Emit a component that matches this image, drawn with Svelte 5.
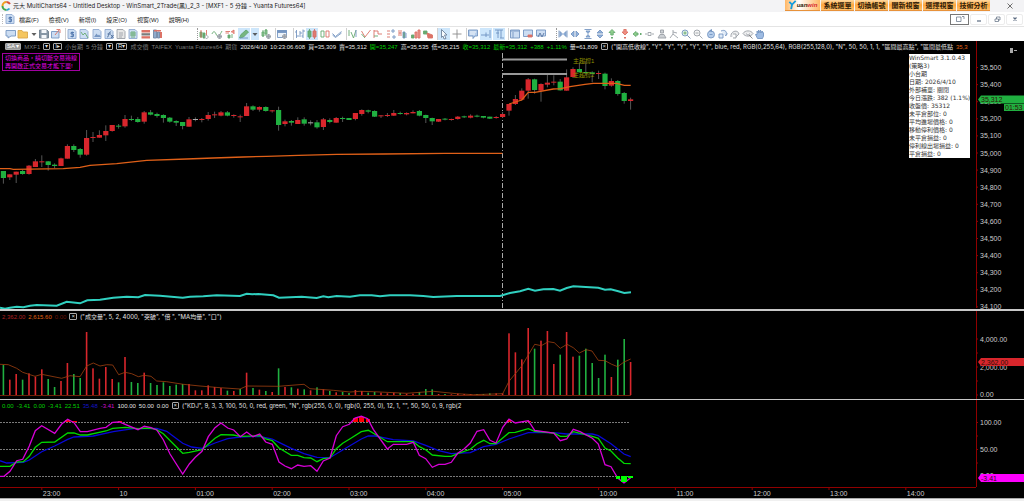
<script>
  const menus = ["檔案(F)", "檢視(V)", "新增(I)", "設定(O)", "視窗(W)", "說明(H)"];
  const shortcuts = ["系統選單", "切換帳號", "開新視窗", "選擇視窗", "技術分析"];

  const blue = "#5f84b8";
  const pale = "#c4d8f0";
  const green = "#4d9c58";
  const red = "#d65a4c";
  const grey = "#8b9199";

  // every icon is a list of [path, fill, stroke] on a 12x12 grid
  const page = ["M2 1.5H8L10 3.5V10.5H2Z", pale, "#7d9cc8"];
  const gear = ["M6.5 8.5a2 2 0 1 0 4 0a2 2 0 1 0-4 0M8.5 6v5M6 8.5h5", "#b9c2cd", grey];
  const icons = {
    book: [["M1 2.5H10.5V8H6L3 10V8H1Z", pale, blue]],
    folder: [["M1 2.5H5L6 4H10.5V10H1Z", "#f4bd45", "#d6982d"]],
    caret: [["M3.5 5H8.5L6 8Z", "#444", "none"]],
    save: [["M1.5 2H9L10.5 3.5V10H1.5Z", "#718496", "#556879"], ["M3.5 2H8.5V5H3.5ZM3.5 7H8.5V10H3.5Z", "#f3f6fa", "none"]],
    send: [["M1.5 3.5H9V10H1.5Z", pale, blue], ["M5 7L9 2M6.5 1.5H10V5", "none", red]],
    sheet: [page, ["M8 4.5H5V6H7.5V8.5H4.5M6.2 3.5V9.5", "none", "#315f9f"]],
    curve: [page, ["M3 4L5 7L7 5L10 10", "none", green]],
    pic: [page, ["M3 9L5.5 5.5L7 7.5L8 6.5L10 9Z", blue, "none"]],
    fx: [page, ["M4 9C6 10 5 3 8 4M4.5 6H8M8 7L10.5 10M10.5 7L8 10", "none", "#284e85"]],
    doc: [["M2 1.5H8L10 3.5V10.5H2Z", "#e2e2e2", grey], ["M4 5H8M4 7H8M4 9H7", "none", grey]],
    chartdoc: [page, ["M3 5H9M3 7H9M5 3V10M7 3V10", "none", green]],
    rows: [["M1.5 2H10V4.5H1.5Z", red, "none"], ["M1.5 5.2H10V7.5H1.5Z", "#666", "none"], ["M1.5 8.2H10V10.5H1.5Z", red, "none"]],
    cols: [["M1.5 2H4.5V10H1.5ZM5.5 4H7.5V10H5.5Z", "#7c9cc2", "#5b7395"], ["M8 4H10V10H8ZM2 2H9V3.5H2Z", red, "none"]],
    bars: [["M2 4H4V9H2ZM5 5H7V10H5Z", green, green], ["M3 2V10M8.5 2V7", "none", red], ["M8.5 7.5a1.5 1.5 0 1 0 .1 0", "#fff", grey]],
    wave: [["M1 6C2 3 4 3 5 6S8 9 11 3", "none", green], gear],
    mix: [["M1.5 3.5H6M1.5 5H5M7 4L10 2V6", "#e98b80", red], ["M4 7H6V10H4ZM8 6V10", green, green]],
    pencil: [["M1.5 10L3 6.5L8 2L10.5 4L5.5 9Z", "#69ad6b", green], ["M2 10H10", "none", blue]],
    cog: [["M3 2V9M6 1V8", "none", green], ["M2 4H4V8H2ZM5 2H7V6H5Z", "#7bba80", green], gear],
    panel: [["M1.5 2.5H10.5V9.5H1.5Z", "#e9f1fa", blue], ["M1.5 2.5H10.5V4.5H1.5Z", blue, blue], gear],
    ohlc: [["M2.5 2V10M1 4H2.5M2.5 8H5M6 3V9M6 5H8M9 1.5V10M9 3H11M7.5 8H9", "none", blue]],
    candles: [["M3.5 1V11", "none", green], ["M2 3H5V9H2Z", "#57a863", green], ["M8.5 1V11", "none", red], ["M7 3H10V9H7Z", "#e2685a", red]],
    hollow: [["M2 3H5V9H2Z", "#fff", green], ["M7 3H10V9H7Z", "#fff", red]],
    line: [["M1.5 5.5L4.5 8.5L10.5 3.5", "none", blue], ["M1.5 7L4.5 9.5L10.5 5", "none", blue]],
    down: [["M2 2V8M4 4L6.5 10L9 2", "none", green], ["M9 2V9", "none", blue]],
    check: [["M1.5 3L5 9L10.5 2", "none", red], ["M1.5 6L5 10", "none", green]],
    steps: [["M2 2V10M2 3H6V6H10", "none", red], ["M2 8H6", "none", green]],
    dots: [["M2 3H5M2 6H5M2 9H5", "none", red], ["M7 2H9V4H7ZM8 8H10V10H8Z", "#fff", blue]],
    pair: [["M2 2V8M4 2V8M2 5H4", "none", red], ["M6 4H8V10H6ZM9 5V10", green, blue]],
    stack: [["M1.5 7H4V10H1.5Z", green, green], ["M5 4H7V10H5ZM8 2H10V10H8Z", "#e98b80", red]],
    flip: [["M1.5 3H5V6H1.5Z", green, green], ["M5 5L10.5 7V10H6Z", red, red]],
    arrow: [["M3.5 1.5L9 7H6.5L8 10.5L6 11L5 8L3.5 9.5Z", "#fff", "#60738c"]],
    cross: [["M6 1.5V10.5M1.5 6H10.5", "none", "#777"]],
    bubble: [["M1.5 2H10.5V8H8L6 10.5V8H1.5Z", "#a9c5e8", blue], ["M3 4H9M3 6H8", "none", "#fff"]],
    rightbar: [["M1 7H9M6 4.5V9M10 2V10", "none", blue]],
    beam: [["M2 2H10M3 5H6M5 2V10M8 2V10M7 10H11", "none", blue]],
    win: [["M1.5 2H10.5V10H1.5Z", pale, blue], ["M1.5 3H10.5M4 4V10", "none", blue]],
    winred: [["M1.5 2H10.5V8.5H1.5Z", pale, blue], ["M6 7H10V9H6Z", red, red]],
    find: [["M1.5 2H10.5V8H1.5Z", pale, blue], ["M3 9L5 5L7 9L9 5", "none", "#3c6094"]],
    squeeze: [["M2 2.5V9.5M10 2.5V9.5M3 3.5L5.5 6L3 8.5ZM9 3.5L6.5 6L9 8.5Z", "#82a8d8", blue]],
    widen: [["M5 3V9L2 6ZM7 3V9L10 6Z", "#82a8d8", blue]],
    vsqueeze: [["M2.5 1.5H9.5M2.5 10.5H9.5M4 3L6 5.5L8 3ZM4 9L6 6.5L8 9Z", "#82a8d8", blue]],
    vwiden: [["M3 5H9L6 2ZM3 7H9L6 10Z", "#82a8d8", blue]],
    up: [["M6 1.5L9 4.5H7.2V7H4.8V4.5H3Z", "#7cc779", green], ["M5 9H7V10.5H5Z", green, "none"]],
    drop: [["M6 7L9 4H7.2V1.5H4.8V4H3Z", "#ef7c6c", red], ["M5 9H7V10.5H5Z", red, "none"]],
    left: [["M2 6L5 3.5V5H7V7H5V8.5Z", "#7cc779", green], ["M9 5H10.5V7H9Z", green, "none"]],
    move: [["M2 6H4M5 4.5H8V7.5H5ZM9 6H11", "none", grey]],
    person: [["M4.5 2H7.5V5H4.5ZM2 10L4 6.5H8L10 10Z", "#c5c9ce", grey]],
    walk: [["M5 2V6L2 10M5 6L10 10M5 4L9 5", "none", grey]],
    zoomin: [["M2 5a3 3 0 1 0 6 0a3 3 0 1 0-6 0", "#d8ecdd", blue], ["M7.3 7.3L10.5 10.5", "none", "#54729f"], ["M3.5 5H6.5M5 3.5V6.5", "none", green]],
    zoomout: [["M2 5a3 3 0 1 0 6 0a3 3 0 1 0-6 0", "#f4f4f4", grey], ["M7.3 7.3L10.5 10.5M3.5 5H6.5", "none", grey]],
    ring: [["M2.5 6.5a3.5 3.5 0 1 0 7 0a3.5 3.5 0 1 0-7 0M4.5 6.5H7.5", "#a9c5e8", blue], ["M4 2.5L7 1V4Z", blue, "none"]],
    redo: [["M2 10H6V6H2ZM4 3C8 1 11 4 8.5 8M8.5 8L10.5 5.5", "#dbe8f7", blue]],
    undo: [["M2 9C1 3 9 1 10 6L7 9M4 10H7V6H4", "#e9eaec", grey]],
    eye: [["M1 5.5C3 2 9 2 11 5.5C9 9 3 9 1 5.5M4.5 5.5a1.5 1.5 0 1 0 3 0", "#e9eaec", grey], ["M7 7L10.5 10.5", "none", "#666"]],
    hand: [["M3.5 10.5L1.5 6.5L3 6.5V3L4.5 5V2L6.3 5V2L8 5V3L9.5 5V8L8.5 10.5Z", "#8db0df", blue]],
  };

  const toolGroups = [
    { width: 57, names: ["book", "folder", "caret", "save", "send"] },
    { width: 98, names: ["sheet", "curve", "pic", "fx", "doc", "chartdoc", "rows", "cols"] },
    { width: 74, grip: true, names: ["bars", "wave", "mix", "pencil", "caret", "cog"], on: ["pencil", "caret"] },
    { width: 14, names: ["panel"] },
    { width: 49, names: ["ohlc", "candles", "hollow", "line"], on: ["candles"] },
    { width: 87, names: ["down", "check", "steps", "dots", "pair", "stack", "flip"] },
    { width: 25, names: ["arrow", "cross"], on: ["arrow"] },
    { width: 38, names: ["bubble", "rightbar", "beam"], on: ["rightbar", "beam"] },
    { width: 38, names: ["win", "winred", "find"] },
    {
      width: 209,
      grip: true,
      names: ["squeeze", "widen", "vsqueeze", "vwiden", "up", "drop", "left", "move", "person", "walk",
        "zoomin", "zoomout", "ring", "redo", "undo", "eye", "hand"],
    },
  ];

  const STEP = 6.4;
  const barX = (i) => 3.4 + i * STEP;

  // colour, body top, body bottom, wick top, wick bottom - in thirds of a pixel
  const candles = `g288,309,288,326 r298,307,298,315 r290,299,290,324 g288,297,284,299 r272,297,270,299
    r259,276,252,276 r259,261,241,276 g259,270,258,287 g269,273,265,280 r250,273,248,273 r213,251,208,251
    g213,225,208,231 g222,239,219,248 r189,239,165,242 r186,189,171,201 r180,188,166,188 r168,181,151,198
    r150,168,150,170 g152,155,147,161 r132,154,120,158 g132,134,122,138 g132,141,126,143 r112,140,108,146
    g112,119,105,121 g117,123,113,128 g120,129,118,143 g128,140,126,143 g138,143,136,153 g141,153,141,163
    r133,155,126,155 w132,134,127,139 r132,135,129,142 r120,132,111,137 r118,120,110,129 r112,122,108,124
    g112,122,108,124 r120,123,118,128 r124,125,119,141 r94,123,84,123 g94,104,91,108 r96,104,94,110
    g96,108,94,110 r106,108,105,113 g105,150,95,167 r139,147,134,154 g138,143,135,152 r135,147,127,147
    g133,146,127,152 w142,143,136,151 g142,157,135,161 r133,156,129,165 g135,141,130,145 r129,143,126,143
    g129,131,125,141 g129,135,129,135 r114,132,114,136 r105,117,103,122 g106,110,104,115 g108,125,106,126
    r121,123,121,129 r120,123,114,126 r114,122,105,123 g114,116,110,119 r114,118,112,121 r111,115,106,115
    g108,122,105,124 g120,129,119,144 g129,139,128,150 r132,140,132,141 g131,134,129,136 r132,134,131,137
    r125,132,123,134 g124,126,122,129 r122,128,118,130 g122,125,119,127 g123,128,123,130 g125,131,125,132
    r126,129,123,131 r117,126,111,129 r87,107,87,122 r72,87,60,90 r47,74,40,77 r13,47,9,71 g13,45,11,56
    r27,47,25,80 r23,29,0,37 r20,23,1,31 g20,46,12,47 r7,47,-17,47 r-18,6,-23,9 g-18,-8,-37,-8
    g-9,-6,-40,1 g-8,-3,-11,22 r-6,-4,-13,12 g-4,33,-7,43 r18,32,10,35 g18,57,15,62 g54,78,51,86 r73,78,68,104`
    .split(/\s+/)
    .map((c, i) => {
      const [top, bottom, high, low] = c.slice(1).split(",").map((v) => 34 + v / 3);
      return { x: barX(i), kind: c[0], top, bottom, high, low };
    });

  // colour and bar top
  const volumes = `g240 r284 r267 g284 r265 r275 r253 g282 g306 r288 r234 g267 g279 r141 r250 r281 r246 r282 g292
    r216 g291 g294 r263 g294 g300 g292 g303 g299 g297 r297 r316 r316 r301 r306 r309 g317 r318 g312 r263 g309
    r314 g318 r321 g250 r306 g307 r311 g313 r316 g307 r313 g318 r322 g321 g324 r315 r318 g323 g321 r323 r325
    r323 g324 r326 r326 g321 g312 g313 r327 g327 r328 r326 r327 r327 g327 g327 g325 r325 r325 r145 r202 r223
    r129 g191 r167 r138 r237 g209 r141 r215 g212 g191 g234 g279 g209 r276 g224 g162 r231`
    .split(/\s+/)
    .map((v, i) => ({ x: barX(i), kind: v[0], top: v.slice(1) / 3 - 26 }));

  const maNight = "0,281 30,281 40,283 190,281 240,277 270,271 350,266 440,256 560,252 640,249 730,246 800,244 895,241 1010,238 1150,237 1335,235 1507,235";
  const maDay = "1527,87 1565,75 1585,52 1605,52 1660,42 1682,41 1710,35 1755,28 1780,25 1850,25 1873,31 1892,31";
  const equity = "0,68 15,71 30,68 50,65 70,67 90,62 110,60 170,62 200,50 240,55 262,46 300,44 340,38 380,35 415,37 435,30 480,32 548,38 570,35 610,34 650,31 720,33 740,26 757,28 775,27 820,31 837,38 905,35 950,39 970,34 985,37 1010,33 1050,35 1080,31 1115,31 1140,34 1170,31 1230,31 1270,33 1300,36 1370,33 1500,33 1530,24 1560,19 1585,11 1605,17 1630,13 1660,12 1680,17 1700,9 1720,4 1795,8 1815,14 1832,13 1855,19 1873,24 1893,22";
  const volumeMa = "0,238 25,239 50,250 68,262 105,274 125,268 185,280 210,272 240,275 260,243 280,234 300,243 320,239 338,240 356,269 375,262 395,266 415,275 433,271 453,274 470,288 500,290 550,298 600,303 660,308 720,312 740,303 835,304 912,298 930,311 1000,316 1050,321 1080,319 1120,320 1220,325 1300,319 1370,326 1420,329 1508,326 1527,289 1565,243 1604,178 1624,182 1645,170 1663,173 1681,190 1701,178 1720,188 1738,204 1758,194 1776,198 1795,226 1815,227 1835,238 1853,245 1872,231 1892,222";
  const lineJ = "0,577 12,577 30,562 50,530 68,526 88,486 106,440 125,425 164,448 185,420 203,406 222,416 241,443 262,443 300,433 318,430 338,415 358,414 414,437 433,427 453,431 470,438 490,467 510,510 548,570 568,540 586,520 606,502 625,458 645,431 663,417 683,432 701,438 721,458 740,444 759,458 779,450 797,474 817,481 837,534 855,546 874,554 893,543 912,547 932,545 951,562 970,531 990,522 1009,455 1028,428 1048,421 1065,402 1084,397 1103,404 1120,436 1162,495 1180,481 1220,481 1240,475 1258,514 1277,524 1297,550 1316,541 1335,541 1354,535 1373,508 1392,495 1411,477 1431,442 1451,437 1470,469 1488,477 1508,430 1527,405 1546,417 1585,410 1604,439 1661,447 1681,470 1700,465 1720,436 1740,443 1777,463 1795,480 1815,542 1833,548 1853,582 1872,597 1892,581";
  const lineK = "0,547 30,547 50,534 70,533 88,517 106,490 125,475 164,474 203,447 222,447 241,453 262,453 318,441 338,433 376,430 414,434 450,432 470,437 490,449 548,508 568,505 606,497 645,463 663,452 700,453 721,457 779,455 797,465 817,470 837,492 874,514 893,514 912,521 932,522 951,533 970,524 990,522 1009,494 1028,478 1048,466 1084,443 1105,439 1125,451 1162,473 1240,473 1258,488 1277,497 1297,513 1335,517 1354,517 1373,509 1411,496 1431,479 1451,469 1470,479 1488,479 1527,446 1546,445 1585,434 1604,442 1661,447 1681,457 1700,457 1720,443 1777,457 1795,463 1815,492 1833,501 1853,522 1872,538 1892,539";
  const lineD = "0,530 20,537 70,535 88,528 125,503 164,486 203,466 222,459 280,456 340,443 400,434 470,433 500,442 520,457 548,478 575,489 606,493 645,477 683,464 720,459 779,457 817,465 837,475 874,493 912,509 951,520 990,521 1028,498 1084,465 1105,456 1125,456 1180,467 1240,471 1277,484 1316,500 1354,509 1411,506 1451,488 1488,481 1527,465 1585,446 1661,446 1700,450 1777,450 1795,455 1833,479 1872,510 1892,518";

  // thirds of a pixel to pane coordinates
  const line = (points, shift) =>
    points
      .split(" ")
      .map((p) => {
        const [x, y] = p.split(",");
        return `${(x / 3).toFixed(1)},${(y / 3 + shift).toFixed(1)}`;
      })
      .join(" ");

  const prices = Array.from({ length: 15 }, (_, i) => (35500 - i * 100).toLocaleString("en-US"));
  const times = [["23:00", 6], ["10", 18], ["01:00", 30], ["02:00", 42], ["03:00", 54], ["04:00", 66],
    ["05:00", 78], ["10:00", 93], ["11:00", 105], ["12:00", 117], ["13:00", 129], ["14:00", 141]];

  const info = ["WinSmart 3.1.0.43", "(策略3)", "小台期", "日期: 2026/4/10", "外部補單: 關閉", "今日漲跌: 382 (1.1%)",
    "收盤價: 35312", "未平倉部位: 0", "平均進場價格: 0", "移動停利價格: 0", "未平倉損益: 0", "停利線出場損益: 0", "平倉損益: 0"];
</script>

<main>
  <header class="title">
    <svg class="logo" viewBox="0 0 12 12">
      <path d="M6 2A4 4 0 0 0 2 6" stroke="#f0a020" />
      <path d="M2 6A4 4 0 0 0 6 10" stroke="#47a548" />
      <path d="M6 10A4 4 0 0 0 9 8.5" stroke="#2ba6cf" />
      <path d="M6 2A4 4 0 0 1 9.5 4" stroke="#d84e36" />
    </svg>
    <h1>元大 MultiCharts64 - Untitled Desktop - WinSmart_2Trade(黑)_2_3 - [MXF1 - 5 分鐘 - Yuanta Futures64]</h1>
    <div class="shortcuts">
      <button class="brand"><svg viewBox="0 0 9 11"><path d="M1 2L4 5L8 1M4 5L3 10" /></svg><i>uan</i><em>win</em></button>
      {#each shortcuts as s}
        <button>{s}</button>
      {/each}
    </div>
    <button class="close" aria-label="關閉"><svg viewBox="0 0 8 8"><path d="M1.5 1.5L6.5 6.5M6.5 1.5L1.5 6.5" /></svg></button>
  </header>

  <nav class="menu">
    <span class="grip"></span>
    <svg class="tool" viewBox="0 0 12 12">
      {#each icons.sheet as [d, fill, stroke]}<path {d} {fill} {stroke} />{/each}
    </svg>
    {#each menus as m}
      <button>{m}</button>
    {/each}
    <div class="mdi">
      <button class="pin" aria-label="分離視窗"><svg viewBox="0 0 10 8"><path d="M1.5 2H6V6.5H1.5ZM7 1.5H9V4" /></svg></button>
      <button aria-label="最小化"><svg viewBox="0 0 10 8"><path class="bold" d="M3 6H7" /></svg></button>
      <button aria-label="還原"><svg viewBox="0 0 10 8"><path d="M3 4H6.5V6.5H3ZM4.5 4V2H8V5H6.5" /></svg></button>
      <button aria-label="關閉圖表"><svg viewBox="0 0 10 8"><path class="bold" d="M3.5 2.5L6.5 5.5M6.5 2.5L3.5 5.5" /></svg></button>
    </div>
  </nav>

  <div class="toolbar">
    {#each toolGroups as g}
      <div class="group" class:gripped={g.grip} style:width="{g.width}px">
        {#each g.names as name}
          <button class:narrow={name === "caret"} class:on={g.on?.includes(name)} aria-label={name}>
            <svg class="tool" viewBox="0 0 12 12">
              {#each icons[name] as [d, fill, stroke]}<path {d} {fill} {stroke} />{/each}
            </svg>
          </button>
        {/each}
      </div>
    {/each}
  </div>

  <section class="pane price">
    <div class="plot">
      <div class="status">
        <button class="chip lit">SA ▾</button><span class="dim">MXF1</span>
        <button class="chip">▾</button><button class="chip">I▸</button>
        <span class="dim">小台期</span><span class="dim">5 分鐘</span>
        <button class="chip">▾</button><button class="chip">R▾</button>
        <span class="dim">成交價</span><span class="dim">TAIFEX</span><span class="dim">Yuanta Futures64</span><span class="dim">期貨</span>
        <span>2026/4/10</span><span>10:23:06.608</span><span>買=35,309</span><span>賣=35,312</span>
        <span class="up">開=35,247</span><span>高=35,535</span><span>低=35,215</span>
        <span class="up">收=35,312</span><span class="up">最新=35,312</span><span class="up">+388</span><span class="up">+1.11%</span>
        <span>量=61,809</span><button class="chip">×</button>
        <span class="args">("開高低收線", "Y", "Y", "Y", "Y", "Y", blue, red, RGB(0,255,64), RGB(255,128,0), "N", 50, 50, 1, 1, "區間最高點", "區間最低點</span>
        <span class="orange">35,3</span>
      </div>
      <p class="notice">切換商品，請切斷交易連線<br />再開啟正式交易才能下單!</p>
      <svg class="chart">
        <line class="session" x1="502.5" x2="502.5" y1="12" y2="267" />
        {#each candles as c}
          <line class="wick" x1={c.x} x2={c.x} y1={c.high} y2={c.low} />
          <rect class={c.kind} x={c.x - 2.6} y={c.top} width="5.2" height={Math.max(c.bottom - c.top, 1)} />
        {/each}
        <polyline class="ma" points={line(maNight, 34)} />
        <polyline class="ma" points={line(maDay, 34)} />
        <polyline class="equity" points={line(equity, 244)} />
        <path class="level" d="M502 18.5H567M502 33H567" />
        <text class="olive" x="573" y="22">主趨撐1</text>
        <text class="olive" x="573" y="36">主趨撐2</text>
      </svg>
      <ul class="info">
        {#each info as row}
          <li>{row}</li>
        {/each}
      </ul>
    </div>
    <svg class="axis">
      <path class="rule" d="M.5 0V267" />
      {#each prices as p, i}
        <path class="rule" d="M0 {26.5 + i * 17.1}H2" />
        <text x="4" y={29 + i * 17.1}>{p}</text>
      {/each}
      <path class="w" d="M34 7H37V12H34ZM38 9H41V10H38Z" />
      <path class="g" d="M2 58.5L5 54.5H48V62.5H5Z" />
      <text class="dark" x="5" y="61">35,312</text>
      <rect class="g" x="28" y="63" width="20" height="7" />
      <text class="dark" x="29" y="69">01:53</text>
    </svg>
  </section>

  <section class="pane lower">
    <div class="plot">
      <div class="status">
        <span class="red">2,362.00</span><span class="orange">2,615.60</span><span class="red deep">0.00</span>
        <button class="chip">×</button><span class="args">("成交量", 5, 2, 4000, "突破", "倍 ", "MA均量", "口")</span>
      </div>
      <svg class="chart">
        {#each volumes as v}
          <rect class={v.kind} x={v.x - 0.8} y={v.top} width="1.6" height={84 - v.top} />
        {/each}
        <polyline class="volume-ma" points={line(volumeMa, -26)} />
        <path class="base" d="M0 84.5H631" />
      </svg>
    </div>
    <svg class="axis">
      <path class="rule" d="M.5 0V90M0 28H2M0 42H2M0 56H2M0 70H2M0 84H2" />
      <text x="4" y="31">4,000.00</text>
      <text x="4" y="59">2,000.00</text>
      <text x="4" y="86">0.00</text>
      <path class="r" d="M2 51L5 47H48V55H5Z" />
      <text class="dark" x="5" y="54">2,362.00</text>
    </svg>
  </section>

  <section class="pane lower">
    <div class="plot">
      <div class="status">
        <span class="up">0.00</span><span class="up">-3.41</span><span class="up">0.00</span><span class="up">-3.41</span><span class="up">22.51</span>
        <span class="blue">35.48</span><span class="pink">-3.41</span><span>100.00</span><span>50.00</span><span>0.00</span>
        <button class="chip">×</button>
        <span class="args">("KDJ", 9, 3, 3, 100, 50, 0, red, green, "N", rgb(255, 0, 0), rgb(0, 255, 0), 12, 1, "", 50, 50, 0, 9, rgb(2</span>
      </div>
      <svg class="chart">
        <path class="grid" d="M0 22.5H630M0 49.5H630M0 76.5H630" />
        <path class="over" d="M65 20H70V22H65ZM72 21H77V22H72ZM118 21H122V22H118ZM353 18H358V22H353ZM359 17H364V22H359ZM366 19H370V22H366ZM507 20H511V22H507ZM527 21H531V22H527Z" />
        <polyline class="d" points={line(lineD, -116)} />
        <polyline class="k" points={line(lineK, -116)} />
        <polyline class="j" points={line(lineJ, -116)} />
        <path class="under" d="M616 76H620V79H616ZM621 76H627V82H621ZM628 76H633V78H628Z" />
      </svg>
    </div>
    <svg class="axis">
      <path class="rule" d="M.5 0V87M0 22.5H2M0 36H2M0 49.5H2M0 63H2" />
      <text x="4" y="25">100.00</text>
      <text x="4" y="52">50.00</text>
      <text x="4" y="78">0.00</text>
      <path class="pinkfill" d="M2 78L5 74H48V82H5Z" />
      <text class="dark" x="5" y="81">-3.41</text>
    </svg>
  </section>

  <svg class="timeline">
    <path class="rule" d="M0 .5H976" />
    {#each times as [label, i]}
      <path class="rule" d="M{barX(i)} 0V3" />
      <text x={barX(i) + 1} y="9">{label}</text>
    {/each}
  </svg>
</main>

<style>
  :global(body) {
    margin: 0;
    background: #f0f0f0;
  }

  main {
    font-family: "Liberation Sans", "Noto Sans CJK TC", sans-serif;
    font-size: 6px;
    overflow: hidden;
  }

  button {
    font: inherit;
    color: inherit;
    background: none;
    border: none;
    padding: 0;
    margin: 0;
    white-space: nowrap;
  }

  svg {
    display: block;
    flex: none;
  }

  .title {
    display: flex;
    align-items: center;
    height: 12px;
    background: #f3f3f5;
    color: #222;
  }

  .logo {
    width: 13px;
    height: 12px;
    fill: none;
    stroke-width: 2;
  }

  h1 {
    flex: 1;
    margin: 0;
    font: 6px/12px Inter, "Noto Sans CJK TC", sans-serif;
    white-space: nowrap;
  }

  .shortcuts {
    display: flex;
    gap: 1px;
    height: 11px;
    align-self: flex-start;
  }

  .shortcuts button {
    display: flex;
    align-items: center;
    justify-content: center;
    width: 33px;
    background: linear-gradient(#ffd9a0, #fba63e 50%, #ffc16d);
    color: #2c1a08;
    font-size: 7px;
    font-weight: bold;
    border-bottom: 1px solid #e8923a;
    box-sizing: border-box;
  }

  .shortcuts .brand {
    width: 35px;
    background: linear-gradient(90deg, #ffb765, #fff 40%, #ffb765);
    font-size: 6px;
  }

  .brand svg {
    width: 9px;
    height: 10px;
    fill: none;
    stroke: #159bdc;
    stroke-width: 2;
  }

  .brand em {
    color: #d51d2c;
  }

  .close {
    width: 34px;
    padding-left: 16px;
  }

  .close svg {
    width: 8px;
    height: 8px;
    stroke: #333;
    stroke-width: 0.7;
  }

  .menu {
    display: flex;
    align-items: center;
    gap: 10px;
    height: 14px;
    background: #fff;
    color: #222;
    border-bottom: 1px solid #e4e4e4;
  }

  .menu .grip {
    width: 2px;
    height: 10px;
    border-right: 1px dotted #bbb;
    margin-right: -9px;
  }

  .menu .tool {
    margin-right: -7px;
  }

  .mdi {
    display: flex;
    gap: 1px;
    margin-left: auto;
    padding-right: 1px;
  }

  .mdi button {
    width: 17px;
    height: 11px;
    display: grid;
    place-items: center;
    border: 1px solid #ececec;
    border-radius: 2px;
    box-sizing: border-box;
  }

  .mdi .pin {
    width: 19px;
    border-color: #777;
    border-radius: 0;
  }

  .mdi svg {
    width: 10px;
    height: 8px;
    fill: none;
    stroke: #5b6b80;
    stroke-width: 0.7;
  }

  .mdi .bold {
    stroke-width: 1.2;
  }

  .toolbar {
    display: flex;
    align-items: center;
    gap: 3px;
    height: 14px;
    padding-left: 5px;
    background: #fff;
  }

  .group {
    display: flex;
    justify-content: space-between;
    flex: none;
  }

  .group + .group {
    border-left: 1px solid #d0d0d0;
  }

  .group + .gripped {
    border-left: 1px dotted #999;
    margin-left: 6px;
  }

  .group:nth-child(3) {
    margin-left: 30px;
  }

  .tool {
    width: 12px;
    height: 12px;
    stroke-width: 0.9;
    opacity: 0.85;
  }

  .group button {
    width: 12px;
    height: 12px;
  }

  .group .narrow {
    width: 8px;
    display: flex;
    justify-content: center;
  }

  .group .on {
    background: #cde6fb;
  }

  .pane {
    display: flex;
    background: #000;
    border-bottom: 2px solid #c8c8c8;
  }

  .price {
    height: 268px;
  }

  .lower {
    height: 88px;
    border-bottom-width: 1px;
  }

  .lower + .lower {
    height: 87px;
    border-bottom: none;
  }

  .plot {
    position: relative;
    flex: 1;
    min-width: 0;
    overflow: hidden;
  }

  .chart {
    position: absolute;
    inset: 0;
    width: 100%;
    height: 100%;
  }

  .axis {
    width: 48px;
    height: 100%;
  }

  .status {
    display: flex;
    align-items: center;
    gap: 3px;
    height: 11px;
    padding-left: 2px;
    color: #e4e4e4;
    white-space: pre;
  }

  .price .status {
    padding-left: 5px;
  }

  .status span {
    flex: none;
  }

  .status .args {
    font-family: Inter, "Noto Sans CJK TC", sans-serif;
    line-height: 8px;
  }

  .status .dim {
    color: #777;
  }

  .status .up {
    color: #00d000;
  }

  .status .red {
    color: #b02020;
  }

  .status .deep {
    color: #6a1408;
  }

  .status .orange {
    color: #e06010;
  }

  .status .blue {
    color: #1414c8;
  }

  .status .pink {
    color: #d010d0;
  }

  .chip {
    flex: none;
    min-width: 7px;
    height: 7px;
    padding: 0 1px;
    border: 1px solid #aaa;
    border-radius: 1px;
    box-sizing: border-box;
    line-height: 5px;
    color: #ddd;
  }

  .lit {
    background: #999;
    color: #fff;
  }

  .notice {
    width: max-content;
    margin: 1px 0 0 2px;
    padding: 0 2px;
    border: 1px solid #a000a0;
    color: #e800e8;
    line-height: 8px;
  }

  .info {
    position: absolute;
    top: 13px;
    right: 6px;
    width: 61px;
    margin: 0;
    padding: 0;
    list-style: none;
    background: #fff;
    color: #333;
    font-family: "DejaVu Sans", "Noto Sans CJK TC", sans-serif;
    line-height: 8px;
    white-space: nowrap;
  }

  .g {
    fill: #20b040;
  }

  .r {
    fill: #d8262c;
  }

  .w {
    fill: #aaa;
  }

  .wick {
    stroke: #555;
    stroke-width: 1;
  }

  polyline {
    fill: none;
    stroke-width: 1.3;
  }

  .ma {
    stroke: #e06018;
  }

  .equity {
    stroke: #30d0c0;
    stroke-width: 2;
  }

  .volume-ma {
    stroke: #a04010;
    stroke-width: 0.8;
  }

  .base {
    stroke: #702008;
  }

  .level {
    stroke: #999;
    stroke-width: 2;
  }

  .session {
    stroke: #aaa;
    stroke-dasharray: 5 2 1 2;
  }

  .grid {
    stroke: #999;
    stroke-width: 0.8;
    stroke-dasharray: 2 1;
  }

  .over {
    fill: #f00;
  }

  .under {
    fill: #0f0;
  }

  .d {
    stroke: #0808d8;
  }

  .k {
    stroke: #00d800;
  }

  .j {
    stroke: #d800d8;
  }

  .pinkfill {
    fill: #f0f;
  }

  .rule {
    fill: none;
    stroke: #900000;
  }

  text {
    font-size: 7px;
    fill: #ccc;
  }

  .olive {
    fill: #909000;
    font-size: 6px;
  }

  .dark {
    fill: #301008;
  }

  .timeline {
    width: 100%;
    height: 12px;
    background: #000;
    border-bottom: 1px solid #aaa;
    box-sizing: border-box;
  }
</style>
